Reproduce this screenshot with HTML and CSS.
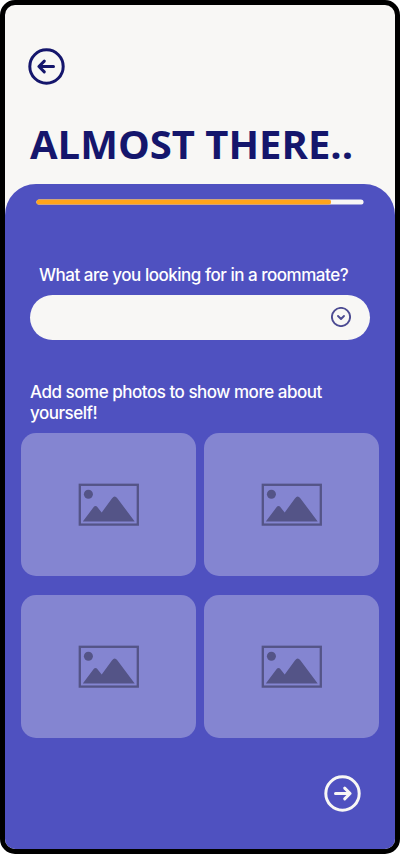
FILE: index.html
```html
<!DOCTYPE html>
<html lang="en">
<head>
<meta charset="utf-8">
<title>Almost there</title>
<link rel="stylesheet" href="styles.css">
</head>
<body>
<svg class="defs" width="0" height="0" aria-hidden="true">
  <symbol id="photo" viewBox="0 0 61 43">
    <rect x="1.8" y="1.8" width="58" height="39.8" fill="none" stroke="currentColor" stroke-width="2.3"/>
    <circle cx="10.4" cy="11.3" r="4.5" fill="currentColor"/>
    <path fill="currentColor" d="M4.8 38.5 L15.5 24.3 Q17.5 21.8 19.5 24.3 L23.7 29.5 L34.1 15.2 Q36.7 11.8 39.3 15.2 L56.7 38.5 Z"/>
  </symbol>
</svg>
<main class="phone">
  <header class="header">
    <button class="round-button back" aria-label="Back">
      <svg viewBox="0 0 37 37"><circle cx="18.5" cy="18.5" r="16.7"/><path d="M25.5 18.5H11M16.3 13.1L10.9 18.5L16.3 23.9"/></svg>
    </button>
    <h1 class="title">ALMOST THERE..</h1>
  </header>
  <section class="panel">
    <div class="progress"><div class="progress-fill"></div></div>
    <label class="question">What are you looking for in a roommate?</label>
    <div class="select">
      <svg viewBox="0 0 20 20"><circle cx="10" cy="10" r="9.1"/><path d="M7 9L10 12L13 9"/></svg>
    </div>
    <p class="prompt">Add some photos to show more about yourself!</p>
    <div class="photos">
      <div class="photo"><svg><use href="#photo"/></svg></div>
      <div class="photo"><svg><use href="#photo"/></svg></div>
      <div class="photo"><svg><use href="#photo"/></svg></div>
      <div class="photo"><svg><use href="#photo"/></svg></div>
    </div>
    <button class="round-button next" aria-label="Next">
      <svg viewBox="0 0 37 37"><circle cx="18.5" cy="18.5" r="16.7"/><path d="M11.5 18.5H26M20.7 13.1L26.1 18.5L20.7 23.9"/></svg>
    </button>
  </section>
</main>
</body>
</html>
```
FILE: styles.css
```css
* { box-sizing: border-box; }
body { margin: 0; background: #fff; }
.defs { display: block; }
.phone {
  width: 400px;
  height: 854px;
  border: 5px solid #000;
  border-radius: 15px;
  background: #f8f7f5;
  overflow: hidden;
  display: flex;
  flex-direction: column;
  font-family: Inter, "Liberation Sans", sans-serif;
}
.header { height: 179px; padding: 43px 23px 0; }
.round-button {
  display: block;
  width: 37px;
  height: 37px;
  padding: 0;
  border: 0;
  background: none;
}
.round-button svg { display: block; width: 37px; height: 37px; }
.round-button svg, .select svg {
  fill: none;
  stroke: currentColor;
  stroke-width: 3;
  stroke-linecap: round;
  stroke-linejoin: round;
}
.back { color: #15166c; }
.title {
  margin: 32px 0 0 2px;
  font: 700 40px/54px "Open Sans", "Noto Sans", sans-serif;
  color: #15166c;
  white-space: nowrap;
}
.panel {
  flex: 1;
  padding: 15px 16px 0;
  border-radius: 31px 31px 0 0;
  background: #4f51c0;
  color: #f8f7f5;
}
.progress {
  width: 328px;
  height: 6px;
  margin-left: 15px;
  border-radius: 3px;
  background: #f8f7f5;
  clip-path: inset(0.4px 0.4px 0.4px 0.4px round 3px);
}
.progress-fill { width: 295px; height: 6px; border-radius: 3px; background: #ffa41c; }
.question, .prompt {
  color: #fff;
  font-size: 17px;
  font-weight: 500;
  line-height: 21px;
  letter-spacing: -0.48px;
}
.question { display: block; margin: 60px 0 0 18px; white-space: nowrap; }
.select {
  display: flex;
  justify-content: flex-end;
  width: 340px;
  height: 45px;
  margin: 9px 0 0 9px;
  padding: 12px 19px 0 0;
  border-radius: 23px;
  background: #f8f7f5;
  color: #4c4b92;
}
.select svg { width: 20px; height: 20px; stroke-width: 1.9; }
.prompt { width: 320px; margin: 42px 0 0 9px; }
.photos {
  display: grid;
  grid-template-columns: 175px 175px;
  grid-auto-rows: 143px;
  gap: 19px 8px;
  margin-top: 9px;
}
.photo {
  padding: 50px 0 0 57px;
  border-radius: 15px;
  background: #8485d1;
  color: #545487;
}
.photo svg { display: block; width: 61px; height: 43px; }
.next { margin: 37px 0 0 303px; color: #f8f7f5; }
```
